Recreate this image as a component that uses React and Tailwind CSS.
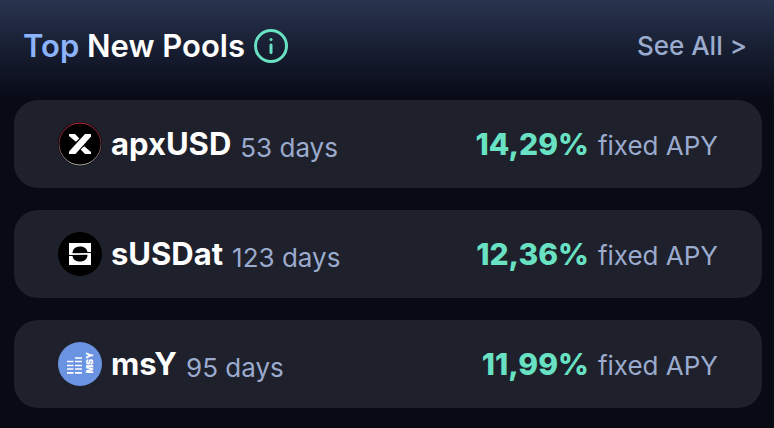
import { useState } from "react";

function ApxLogo() {
    return (
        <svg viewBox="0 0 44 44" className="size-11 shrink-0" aria-hidden="true">
            <defs>
                <linearGradient id="apx-ring" x1="0" y1="0" x2="0" y2="1">
                    <stop offset="0" stopColor="#c22b40" />
                    <stop offset="0.45" stopColor="#6a2a35" />
                    <stop offset="1" stopColor="#b0b0b0" />
                </linearGradient>
            </defs>
            <circle cx="22" cy="22" r="22" fill="#000" />
            <circle cx="22" cy="22" r="21" fill="none" stroke="url(#apx-ring)" strokeWidth="1" />
            <path d="M11 12h6l4.300 4.500-3.500 3.200L11 14z" fill="#fff" />
            <path d="M33 32h-6l-4.300-4.500 3.500-3.200L33 30z" fill="#fff" />
            <path d="M27 12h6v2.500L17.500 32H11v-2.500z" fill="#fff" />
        </svg>
    )
}

function SaturnLogo() {
    return (
        <svg viewBox="0 0 44 44" className="size-11 shrink-0" aria-hidden="true">
            <circle cx="22" cy="22" r="22" fill="#000" />
            <rect x="11" y="11" width="22" height="22" fill="#fff" />
            <path d="M14.500 21.300C14.500 17.500 17 14.500 22 14.500s7 2.500 7.500 5.500H33v1z" fill="#000" />
            <path d="M29.500 22.700C29.500 26.500 27 29.500 22 29.500s-7-2.500-7.500-5.500H11v-1z" fill="#000" />
        </svg>
    )
}

function MsyLogo() {
    return (
        <svg viewBox="0 0 44 44" className="size-11 shrink-0" aria-hidden="true">
            <circle cx="22" cy="22" r="22" fill="#6a93e2" />
            <path d="M9 19.500h6.500M9 23.500h6.500M9 27h6.500M9 30.800h6.500M17 16h7M17 19.500h7M17 23.500h7M17 27h7M17 30.800h7" stroke="#fff" strokeWidth="1.700" />
            <text transform="translate(35 31.500) rotate(-90)" fontSize="9" fontWeight="900" fill="#fff">MSY</text>
        </svg>
    )
}

const pools = [
    { name: 'apxUSD', days: 53, apy: '14,29%', Logo: ApxLogo },
    { name: 'sUSDat', days: 123, apy: '12,36%', Logo: SaturnLogo },
    { name: 'msY', days: 95, apy: '11,99%', Logo: MsyLogo },
];

function PoolCard({ name, days, apy, Logo }) {
    return (
        <li className="flex items-center justify-between h-22 px-11 rounded-3xl bg-[#1e202c]">
            <div className="flex items-center gap-[9px]">
                <Logo />
                <span className="text-[31px] leading-10 font-bold text-white">{name}</span>
                <span className="pt-2 text-[26px] leading-10 text-[#9babcd]">{days} days</span>
            </div>
            <div className="flex items-baseline gap-[9px] pt-0.5">
                <span className="text-[30px] leading-10 font-extrabold text-[#69e2c3]">{apy}</span>
                <span className="text-[26px] leading-10 text-[#9babcd]">fixed APY</span>
            </div>
        </li>
    )
}

function App() {
    const [showInfo, setShowInfo] = useState(false);

    return (
        <main className="min-h-screen pl-3.5 pr-3 pb-5 bg-[#080a16] bg-linear-to-b from-[#28344f] to-[#080a16] to-[100px] font-['Inter',sans-serif]">
            <header className="flex items-center justify-between h-25 pb-2 pl-[9px] pr-[15px]">
                <div className="relative flex items-center gap-2">
                    <h1 className="text-[31px] leading-10 font-semibold text-white">
                        <span className="text-[#8bb4fc]">Top</span> New Pools
                    </h1>
                    <button type="button" aria-label="About new pools" className="cursor-pointer" onClick={() => setShowInfo(!showInfo)}>
                        <svg viewBox="0 0 36 36" className="size-9" fill="none" stroke="#69e2c3" strokeWidth="3" strokeLinecap="round">
                            <circle cx="18" cy="18" r="15.500" />
                            <path d="M18 17v7.500" />
                            <path d="M18 11.500v.1" />
                        </svg>
                    </button>
                    {
                        showInfo ?
                        <div className="absolute left-0 top-full z-10 px-4 py-2 rounded-lg bg-[#28344f] text-base text-white">
                            Recently added pools with the highest fixed APY.
                        </div> :
                        <></>
                    }
                </div>
                <a href="#pools" className="text-[26px] leading-10 font-medium text-[#9babcd]">See All &gt;</a>
            </header>
            <ul id="pools" className="flex flex-col gap-5.5">
                {pools.map(pool => <PoolCard key={pool.name} {...pool} />)}
            </ul>
        </main>
    )
}

export default App;
